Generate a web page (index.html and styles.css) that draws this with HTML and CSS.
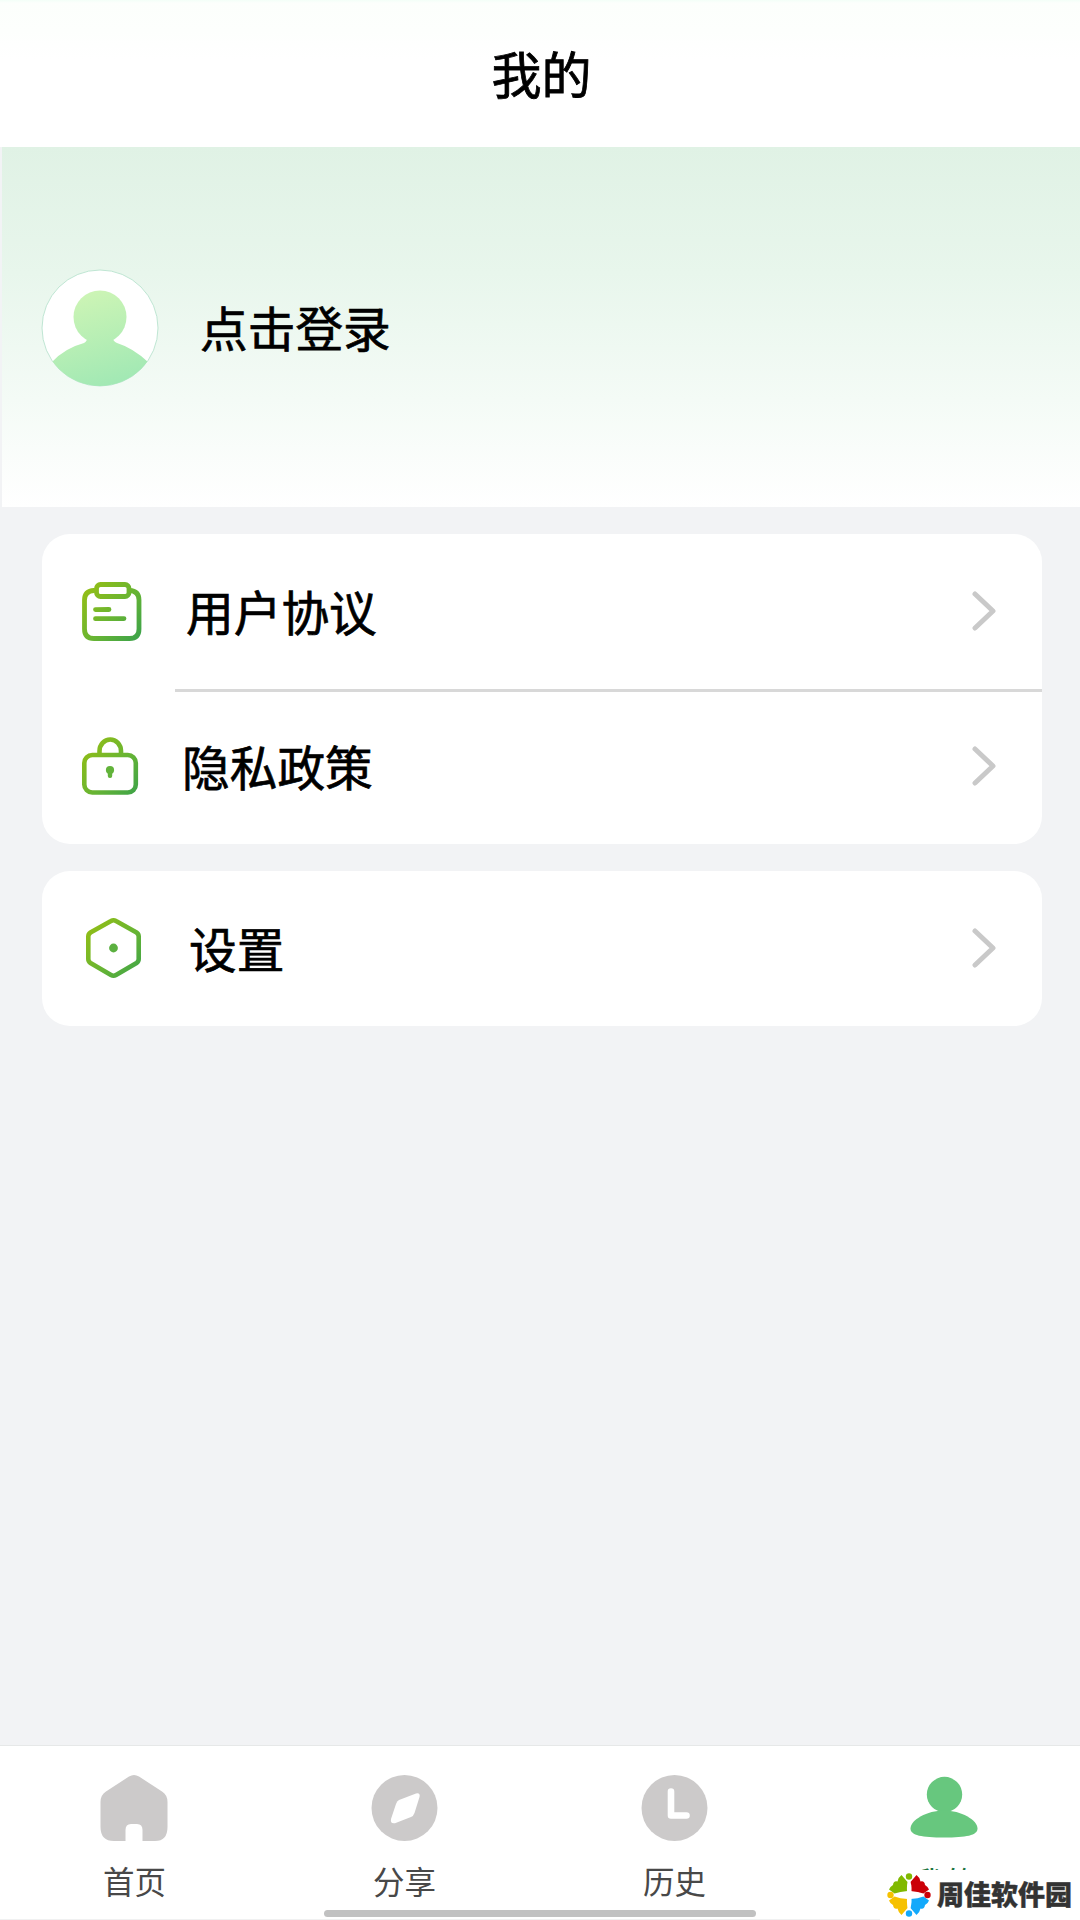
FILE: index.html
```html
<!DOCTYPE html>
<html lang="zh-CN">
<head>
<meta charset="utf-8">
<title>我的</title>
<link rel="stylesheet" href="styles.css">
</head>
<body>
<div class="screen">
  <header class="topbar"><h1 class="topbar-title">我的</h1></header>

  <section class="profile">
    <svg class="avatar" viewBox="0 0 118 118">
      <defs>
        <linearGradient id="person" gradientUnits="userSpaceOnUse" x1="45" y1="20" x2="75" y2="118">
          <stop offset="0" stop-color="#cef5b5"/><stop offset="1" stop-color="#a0e8b4"/>
        </linearGradient>
        <clipPath id="disc"><circle cx="59" cy="59" r="58"/></clipPath>
      </defs>
      <circle cx="59" cy="59" r="58" fill="#fff" stroke="#bfe6d3" stroke-width="1"/>
      <g clip-path="url(#disc)" fill="url(#person)">
        <circle cx="59" cy="48" r="26.5"/>
        <path d="M46 66Q47 72 43 74Q24 79 11 93V118H107V93Q92 79 76 74Q71 72 72 66Z"/>
      </g>
    </svg>
    <span class="profile-name">点击登录</span>
  </section>

  <main class="content">
    <ul class="card">
      <li class="row">
        <svg class="row-icon icon-doc" viewBox="0 0 60 60">
          <defs><linearGradient id="leaf" gradientUnits="userSpaceOnUse" x1="3" y1="8" x2="57" y2="56">
            <stop offset="0" stop-color="#92be16"/><stop offset=".55" stop-color="#66b434"/><stop offset="1" stop-color="#3da349"/>
          </linearGradient></defs>
          <g fill="none" stroke="url(#leaf)" stroke-width="4.8" stroke-linecap="round" stroke-linejoin="round">
            <path d="M12 8.5Q2.500 9 2.500 18V47Q2.500 56.500 12 56.500H47.500Q57 56.500 57 47V18Q57 9 47.500 8.500"/>
            <rect x="14.500" y="2.500" width="32.500" height="12" rx="4"/>
            <path d="M13.500 27.600L27 27.500M13.500 36.700L42 36.600"/>
          </g>
        </svg>
        <span class="row-label">用户协议</span>
        <svg class="chevron" viewBox="0 0 24 40"><path d="M3 3L21 20L3 37"/></svg>
      </li>
      <li class="row row-privacy">
        <svg class="row-icon icon-lock" viewBox="0 0 60 60">
          <g fill="none" stroke="url(#leaf)" stroke-width="4.600">
            <rect x="2.300" y="18" width="51.500" height="37.500" rx="8"/>
            <path d="M17.500 18V14A10.700 11.500 0 0 1 39 14V18"/>
          </g>
          <circle cx="28" cy="33" r="4.100" fill="#62b33a"/><rect x="25.800" y="33" width="4.400" height="8" rx="2" fill="#62b33a"/>
        </svg>
        <span class="row-label">隐私政策</span>
        <svg class="chevron" viewBox="0 0 24 40"><path d="M3 3L21 20L3 37"/></svg>
      </li>
    </ul>
    <ul class="card">
      <li class="row row-settings">
        <svg class="row-icon icon-hex" viewBox="0 0 60 62">
          <path d="M25 4Q27.500 2.500 30 4L50.500 15.500Q52.700 17 52.700 19.500V42Q52.700 44.500 50.500 46L30 58Q27.500 59.500 25 58L4.500 46Q2.300 44.500 2.300 42V19.500Q2.300 17 4.500 15.500Z" fill="none" stroke="url(#leaf)" stroke-width="4.600"/>
          <circle cx="27.500" cy="31" r="4.400" fill="#5bb040"/>
        </svg>
        <span class="row-label">设置</span>
        <svg class="chevron" viewBox="0 0 24 40"><path d="M3 3L21 20L3 37"/></svg>
      </li>
    </ul>
  </main>

  <nav class="tabs">
    <a class="tab">
      <svg class="tab-icon" viewBox="0 0 68 68"><path fill="#cccaca" d="M29 2.500Q34 -0.500 39 2.500L62 17.500Q67.500 21 67.500 28V53Q67.500 67 55 67H42.500V56Q42.500 50 37 50H31Q25.500 50 25.500 56V67H14Q.5 67 .5 53V28Q.5 21 6 17.500Z"/></svg>
      <span>首页</span>
    </a>
    <a class="tab">
      <svg class="tab-icon" viewBox="0 0 68 68"><circle cx="34.500" cy="34" r="33" fill="#cccaca"/><path fill="#fff" d="M29 26L46 19.500Q50.500 18.500 49.500 23L44.500 39Q43.500 42 41 43L25 49.200Q20 50 21 45L26 30Q27 27 29 26Z"/></svg>
      <span>分享</span>
    </a>
    <a class="tab">
      <svg class="tab-icon" viewBox="0 0 68 68"><circle cx="34.500" cy="34" r="33" fill="#cccaca"/><path d="M31 17.500V41.500H46.500" fill="none" stroke="#fff" stroke-width="6.600" stroke-linecap="round" stroke-linejoin="round"/></svg>
      <span>历史</span>
    </a>
    <a class="tab tab-active">
      <svg class="tab-icon" viewBox="0 0 68 68"><g fill="#67c77e"><circle cx="34.500" cy="20.500" r="17.700"/><path d="M34 36.500C51 36.500 67.500 46 67.500 54.500C67.500 61.500 56 63.500 34 63.500S.5 61.500 .5 54.500C.5 46 17 36.500 34 36.500Z"/></g></svg>
      <span>我的</span>
    </a>
    <div class="home-indicator"></div>
  </nav>

  <div class="brand">
    <svg class="brand-logo" viewBox="0 0 44 44">
      <defs>
        <path id="petal" d="M20.500 18V9L14.500 2Q11.500 4 10.500 8.500Q6.500 7.500 6 12Q3 13.500 2 16.500L7.500 20.500Q13 18.500 20.500 18Z"/>
      </defs>
      <use href="#petal" fill="#80b900"/>
      <use href="#petal" fill="#cb0008" transform="matrix(-1 0 0 1 44 0)"/>
      <use href="#petal" fill="#f6c100" transform="matrix(1 0 0 -1 0 44)"/>
      <use href="#petal" fill="#13a9fb" transform="matrix(-1 0 0 -1 44 44)"/>
      <path fill="#fff" d="M22 7Q25 10 24.500 19Q32 18.500 36 22Q31 25 24.500 24.500Q25 33 22 38Q19.500 33 20 24.500Q12 25 8 22Q12 19 20 19Q19.500 10 22 7Z"/>
      <circle cx="22" cy="3.500" r="3.200" fill="#80b900"/><circle cx="40.500" cy="22" r="3.200" fill="#cb0008"/>
      <circle cx="22" cy="40.500" r="3.200" fill="#13a9fb"/><circle cx="3.500" cy="22" r="3.200" fill="#f6c100"/>
    </svg>
    <span class="brand-name">周佳软件园</span>
  </div>
</div>
</body>
</html>
```
FILE: styles.css
```css
* { box-sizing: border-box; }

body {
  margin: 0;
  font-family: "Noto Sans CJK SC", sans-serif;
  color: #000;
}

.screen {
  position: relative;
  display: flex;
  flex-direction: column;
  width: 1080px;
  height: 1920px;
  overflow: hidden;
  background: #f2f3f5;
}

.topbar {
  display: flex;
  justify-content: center;
  height: 147px;
  padding-top: 35px;
  background: linear-gradient(#f3fff8 0, #fcfffc 3px, #fdfffd 30px, #fff 60px);
}

.topbar-title {
  margin: 0 0 0 3px;
  font-size: 50px;
  font-weight: 400;
  line-height: 74px;
  -webkit-text-stroke: 0.8px currentColor;
}

.profile {
  display: flex;
  align-items: center;
  height: 360px;
  margin-left: 2px;
  padding: 1px 0 0 39px;
  background: linear-gradient(#e0f2e5 0, #e8f6ec 35%, #f4fbf6 70%, #fff 100%);
}

.avatar {
  width: 118px;
  height: 118px;
}

.profile-name {
  margin: 0 0 2px 41px;
  font-size: 47.7px;
  font-weight: 400;
  line-height: 70px;
  -webkit-text-stroke: 0.7px currentColor;
}

.content {
  display: flex;
  flex: 1;
  flex-direction: column;
  gap: 27px;
  padding: 27px 38px 0 42px;
}

.card {
  margin: 0;
  padding: 0;
  list-style: none;
  border-radius: 28px;
  background: #fff;
}

.row {
  display: flex;
  position: relative;
  align-items: center;
  height: 155px;
  padding: 0 46px 0 40px;
}

.row-privacy::before {
  content: "";
  position: absolute;
  top: 0;
  right: 0;
  left: 133px;
  height: 3px;
  background: #d8d8d8;
}

.row-icon {
  flex: none;
  width: 60px;
  height: 60px;
}

.row-label {
  flex: 1;
  margin: 0 0 2px 44px;
  font-size: 47.7px;
  font-weight: 400;
  line-height: 70px;
  -webkit-text-stroke: 0.7px currentColor;
}

.row-privacy .row-label { margin-left: 40px; }

.row-settings { padding-left: 44px; }

.row-settings .row-label { margin-left: 43px; }

.icon-hex {
  height: 62px;
  margin-bottom: 1px;
}

.chevron {
  width: 24px;
  height: 40px;
  margin-bottom: 2px;
  fill: none;
  stroke: #c9c9c9;
  stroke-width: 5;
  stroke-linecap: round;
  stroke-linejoin: round;
}

.tabs {
  display: grid;
  position: relative;
  grid-template-columns: repeat(4, 1fr);
  height: 175px;
  border-top: 1px solid #e6e8e8;
  border-bottom: 1px solid #f0f1f1;
  background: #fff;
}

.tab {
  display: flex;
  flex-direction: column;
  align-items: center;
  padding: 28px 1px 0 0;
  color: #484848;
  font-size: 31.5px;
  line-height: 46px;
}

.tab-icon {
  width: 68px;
  height: 68px;
  margin: 0 1px 15px 0;
}

.tab-active {
  color: #1c7540;
  line-height: 48px;
}

.home-indicator {
  position: absolute;
  bottom: 2px;
  left: 324px;
  width: 432px;
  height: 7px;
  border-radius: 4px;
  background: #c1c1c1;
}

.brand {
  display: flex;
  position: absolute;
  right: 0;
  bottom: 0;
  align-items: center;
  width: 200px;
  height: 50px;
  padding: 0 0 1px 7px;
  background: #fff;
}

.brand-logo {
  flex: none;
  width: 44px;
  height: 44px;
}

.brand-name {
  margin: 0 0 2px 6px;
  color: #333;
  font-size: 27px;
  font-weight: 900;
  line-height: 40px;
  white-space: nowrap;
  -webkit-text-stroke: 0.4px currentColor;
}
```
